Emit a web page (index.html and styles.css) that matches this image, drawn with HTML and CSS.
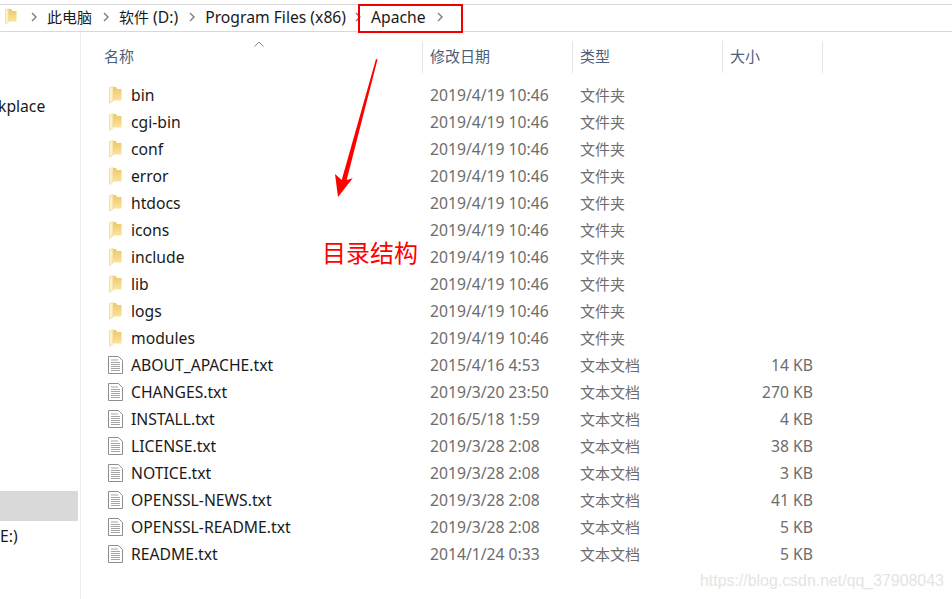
FILE: index.html
```html
<!DOCTYPE html>
<html lang="zh">
<head>
  <meta charset="UTF-8">
  <title>Apache</title>
  <link rel="stylesheet" href="styles.css">
</head>
<body>
<svg width="0" height="0" class="defs">
  <linearGradient id="folder-back" x1="0" y1="0" x2="0" y2="1">
    <stop offset="0" stop-color="#eec768"/>
    <stop offset="1" stop-color="#fbe39b"/>
  </linearGradient>
  <symbol id="folder" viewBox="0 0 13 18">
    <path d="M2 1h5l1 2h4.500v11.500H2z" fill="url(#folder-back)"/>
    <path d="M.5 1.500L4 .5v14.500L.5 17.500z" fill="#fef0c4" stroke="#ecd08a" stroke-width=".6"/>
  </symbol>
  <symbol id="txt" viewBox="0 0 15 18">
    <path d="M.5.5h10l4 4v13H.5z" fill="#fff" stroke="#8e8e8e"/>
    <path d="M3 4h7M3 6.500h9M3 8.500h9M3 10.500h9M3 12.500h9M3 14.500h9" stroke="#a5a5a5"/>
  </symbol>
  <symbol id="chev" viewBox="0 0 6 10">
    <path d="M1 1l4 4-4 4" fill="none" stroke="#7d7d7d" stroke-width="1.400"/>
  </symbol>
</svg>

<div class="crumbs">
  <svg class="crumb-folder"><use href="#folder"/></svg>
  <svg class="chev"><use href="#chev"/></svg>
  <span class="crumb zh">此电脑</span>
  <svg class="chev"><use href="#chev"/></svg>
  <span class="crumb"><span class="zh">软件</span> (D:)</span>
  <svg class="chev"><use href="#chev"/></svg>
  <span class="crumb tight">Program Files (x86)</span>
  <svg class="chev"><use href="#chev"/></svg>
  <span class="crumb">Apache</span>
  <svg class="chev"><use href="#chev"/></svg>
</div>

<div class="main">
  <div class="side">
    <div class="side-item first">kplace</div>
    <div class="side-item selected"></div>
    <div class="side-item">E:)</div>
  </div>

  <div class="files">
    <div class="head">
      <svg class="sort" viewBox="0 0 10 6"><path d="M.5 5.500L5 1l4.500 4.500" fill="none" stroke="#8a8a8a"/></svg>
      <div class="col">名称</div>
      <div class="col">修改日期</div>
      <div class="col">类型</div>
      <div class="col">大小</div>
    </div>
    <div id="rows"></div>
  </div>
</div>

<div class="red-box"></div>
<svg class="arrow" viewBox="0 0 46 140">
  <path d="M44 1L45.500 1.500L14.700 122L20.700 120.300L6 139L3 116L9.700 122z" fill="#fe0000"/>
</svg>
<div class="note">目录结构</div>
<div class="mark">https://blog.csdn.net/qq_37908043</div>

<script>
  const dirs = ['bin', 'cgi-bin', 'conf', 'error', 'htdocs', 'icons', 'include', 'lib', 'logs', 'modules'];
  const docs = [
    ['ABOUT_APACHE.txt', '2015/4/16 4:53', '14 KB'],
    ['CHANGES.txt', '2019/3/20 23:50', '270 KB'],
    ['INSTALL.txt', '2016/5/18 1:59', '4 KB'],
    ['LICENSE.txt', '2019/3/28 2:08', '38 KB'],
    ['NOTICE.txt', '2019/3/28 2:08', '3 KB'],
    ['OPENSSL-NEWS.txt', '2019/3/28 2:08', '41 KB'],
    ['OPENSSL-README.txt', '2019/3/28 2:08', '5 KB'],
    ['README.txt', '2014/1/24 0:33', '5 KB']
  ];

  function addRow(icon, name, date, type, size) {
    const row = document.createElement('div');
    row.className = 'row';
    row.innerHTML =
      '<div class="name"><svg class="icon ' + icon + '"><use href="#' + icon + '"/></svg><span>' + name + '</span></div>' +
      '<div class="cell">' + date + '</div>' +
      '<div class="cell zh">' + type + '</div>' +
      '<div class="cell size">' + size + '</div>';
    document.getElementById('rows').appendChild(row);
  }

  dirs.forEach(d => addRow('folder', d, '2019/4/19 10:46', '文件夹', ''));
  docs.forEach(d => addRow('txt', d[0], d[1], '文本文档', d[2]));
</script>
</body>
</html>
```
FILE: styles.css
```css
* {
  box-sizing: border-box;
  margin: 0;
  padding: 0;
}

body {
  width: 952px;
  height: 599px;
  overflow: hidden;
  background-color: #fff;
  color: #1a1a1a;
  font-family: "Noto Sans", "Noto Sans CJK SC", sans-serif;
  font-size: 15.7px;
  position: relative;
}

.defs {
  position: absolute;
}

.zh {
  font-size: 15px;
}

/* Barra de ruta */
.crumbs {
  height: 28px;
  margin-top: 4px;
  border-top: 1px solid #d9d9d9;
  border-bottom: 1px solid #d9d9d9;
  display: flex;
  align-items: center;
  padding-left: 5px;
  padding-bottom: 3px;
}

.crumb-folder {
  width: 12px;
  height: 17px;
  margin-right: 14px;
}

.chev {
  width: 6px;
  height: 10px;
  flex: none;
  margin-right: 10px;
}

.crumb {
  margin-right: 11px;
}

.crumb.tight {
  margin-right: 9px;
}

.main {
  display: flex;
  height: 567px;
}

.side {
  width: 81px;
  border-right: 1px solid #ededed;
  padding-top: 62px;
  overflow: hidden;
}

.side-item {
  height: 24px;
  line-height: 24px;
}

.side-item.first {
  margin-left: -2px;
}

.side-item.selected {
  width: 78px;
  height: 30px;
  margin-top: 373px;
  background-color: #d9d9d9;
}

.side-item:last-child {
  margin-top: 3px;
}

.files {
  flex: 1;
  position: relative;
}

.head {
  height: 40px;
  display: grid;
  grid-template-columns: 342px 150px 150px 100px;
  margin-top: 9px;
}

.col {
  height: 32px;
  padding-left: 7px;
  padding-top: 1px;
  line-height: 29px;
  color: #4c607a;
  font-size: 15px;
  border-right: 1px solid #e5e5e5;
}

.col:first-of-type {
  padding-left: 23px;
}

.sort {
  position: absolute;
  left: 173px;
  top: 9px;
  width: 10px;
  height: 6px;
}

.row {
  height: 27px;
  display: grid;
  grid-template-columns: 342px 150px 142px 100px;
  align-items: center;
}

.name {
  display: flex;
  align-items: center;
  padding-left: 27px;
}

.icon {
  width: 15px;
  height: 18px;
  margin-right: 8px;
  flex: none;
}

.icon.folder {
  width: 13px;
  margin-left: 1px;
  margin-right: 9px;
}

.cell {
  padding-left: 7px;
  color: #6d6d6d;
}

.size {
  padding-left: 0;
  text-align: right;
  padding-right: 2px;
}

/* Anotaciones encima de la captura */
.red-box {
  position: absolute;
  left: 358px;
  top: 4px;
  width: 105px;
  height: 29px;
  border: 2px solid #f00000;
}

.arrow {
  position: absolute;
  left: 332px;
  top: 58px;
  width: 46px;
  height: 140px;
}

.note {
  position: absolute;
  left: 322px;
  top: 236px;
  font-size: 24px;
  color: #fe0000;
  line-height: 32px;
  font-family: "Noto Sans CJK SC", sans-serif;
}

.mark {
  position: absolute;
  left: 700px;
  top: 572px;
  font-family: "Liberation Sans", sans-serif;
  font-size: 15.900px;
  color: #e4e4e4;
}
```
